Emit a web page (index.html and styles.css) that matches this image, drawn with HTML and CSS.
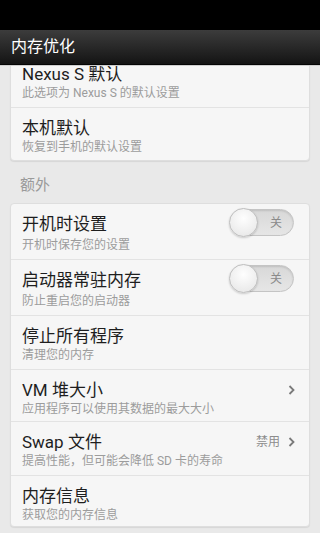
FILE: index.html
```html
<!DOCTYPE html>
<html lang="zh-CN">
<head>
<meta charset="utf-8">
<meta name="viewport" content="width=320">
<title>内存优化</title>
<link rel="stylesheet" href="styles.css">
</head>
<body>
<div class="screen">
  <div class="statusbar"></div>
  <header class="actionbar"><h1 class="actionbar-title">内存优化</h1></header>
  <main class="scroll">
    <section class="card card-first">
      <div class="item h53">
        <div class="text"><div class="title">Nexus S 默认</div><div class="summary">此选项为 Nexus S 的默认设置</div></div>
      </div>
      <div class="item h53">
        <div class="text"><div class="title">本机默认</div><div class="summary">恢复到手机的默认设置</div></div>
      </div>
    </section>
    <h2 class="section-label">额外</h2>
    <section class="card">
      <div class="item h55">
        <div class="text"><div class="title">开机时设置</div><div class="summary">开机时保存您的设置</div></div>
        <div class="switch"><span class="knob"></span><span class="switch-label">关</span></div>
      </div>
      <div class="item h56">
        <div class="text"><div class="title">启动器常驻内存</div><div class="summary">防止重启您的启动器</div></div>
        <div class="switch"><span class="knob"></span><span class="switch-label">关</span></div>
      </div>
      <div class="item h54">
        <div class="text"><div class="title">停止所有程序</div><div class="summary">清理您的内存</div></div>
      </div>
      <div class="item h52">
        <div class="text"><div class="title">VM 堆大小</div><div class="summary">应用程序可以使用其数据的最大大小</div></div>
        <svg class="chevron" viewBox="0 0 7 10" width="7" height="10"><polyline points="1.5,1 5.5,5 1.5,9" fill="none" stroke="#7a7a7a" stroke-width="1.8"/></svg>
      </div>
      <div class="item h54">
        <div class="text"><div class="title">Swap 文件</div><div class="summary">提高性能，但可能会降低 SD 卡的寿命</div></div>
        <span class="value">禁用</span>
        <svg class="chevron" viewBox="0 0 7 10" width="7" height="10"><polyline points="1.5,1 5.5,5 1.5,9" fill="none" stroke="#7a7a7a" stroke-width="1.8"/></svg>
      </div>
      <div class="item h51">
        <div class="text"><div class="title">内存信息</div><div class="summary">获取您的内存信息</div></div>
      </div>
    </section>
  </main>
</div>
</body>
</html>
```

FILE: styles.css
```css
html, body {
  margin: 0;
  padding: 0;
  background: #e9e9e9;
}
body {
  font-family: Roboto, "Noto Sans CJK SC", sans-serif;
}
.screen {
  width: 320px;
  height: 533px;
  overflow: hidden;
  display: flex;
  flex-direction: column;
  background: #e9e9e9;
}
.statusbar {
  height: 30px;
  flex: none;
  background: #000;
}
.actionbar {
  height: 34px;
  flex: none;
  display: flex;
  align-items: center;
  padding: 0 11px;
  background: linear-gradient(#3c3c3c, #262626 55%, #141414);
  border-bottom: 1px solid #050505;
  box-shadow: 0 1px 0 #cfcfcf;
  position: relative;
  z-index: 2;
}
.actionbar-title {
  margin: 0;
  font-size: 16px;
  font-weight: normal;
  color: #fff;
  line-height: 20px;
}
.scroll {
  flex: 1;
  overflow: hidden;
  display: flex;
  flex-direction: column;
}
.card {
  margin: 0 10px;
  background: #f6f6f6;
  border: 1px solid #dedede;
  border-radius: 4px;
  box-shadow: 0 1px 1px rgba(0,0,0,0.08);
  flex: none;
}
.card-first {
  margin-top: -12px;
}
.item {
  display: flex;
  align-items: flex-start;
  padding: 9px 11px 0;
  box-sizing: border-box;
}
.item + .item {
  border-top: 1px solid #e3e3e3;
}
.h51 { height: 51px; }
.h52 { height: 52px; }
.h53 { height: 53px; }
.h54 { height: 54px; }
.h55 { height: 55px; }
.h56 { height: 56px; }
.text {
  flex: 1;
  min-width: 0;
}
.title {
  font-size: 17px;
  line-height: 22px;
  color: #1e1e1e;
}
.summary {
  font-size: 12px;
  line-height: 16px;
  color: #9c9c9c;
  white-space: nowrap;
}
.h55 .summary, .h56 .summary { margin-top: 2px; }
.section-label {
  margin: 0;
  padding: 14px 0 8px 20px;
  font-size: 15px;
  line-height: 20px;
  font-weight: normal;
  color: #9a9a9a;
  flex: none;
}
.switch {
  position: relative;
  width: 64px;
  height: 27px;
  box-sizing: border-box;
  border-radius: 14px;
  border: 1px solid #c4c4c4;
  background: linear-gradient(#d8d8d8, #e6e6e6);
  box-shadow: inset 0 1px 2px rgba(0,0,0,0.12);
  display: flex;
  align-items: center;
  justify-content: flex-end;
  margin-top: -4px;
  margin-right: 4px;
}
.switch-label {
  width: 34px;
  text-align: center;
  font-size: 12px;
  color: #8a8a8a;
  line-height: 14px;
}
.knob {
  position: absolute;
  left: -2px;
  top: -2px;
  width: 29px;
  height: 29px;
  box-sizing: border-box;
  border-radius: 50%;
  background: radial-gradient(circle at 50% 35%, #fefefe, #ececec 70%, #e2e2e2);
  border: 1px solid #bdbdbd;
  box-shadow: 0 1px 2px rgba(0,0,0,0.18);
}
.value {
  font-size: 12px;
  line-height: 16px;
  color: #8c8c8c;
  margin-right: 8px;
  margin-top: 3px;
}
.chevron {
  flex: none;
  margin-right: 3px;
  margin-top: 6px;
}
```
